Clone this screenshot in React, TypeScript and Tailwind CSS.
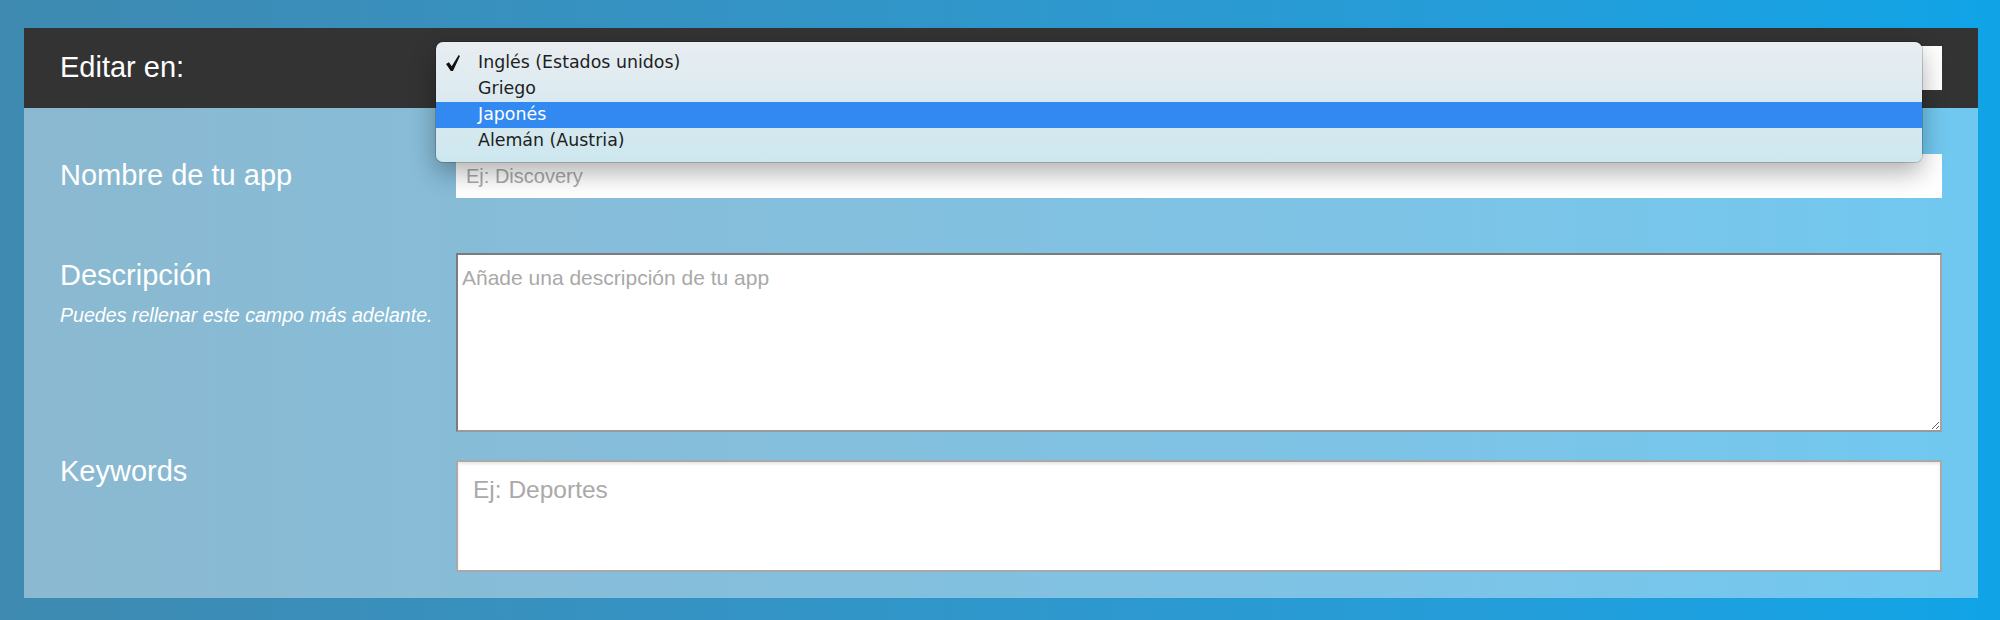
import { useState } from "react";

const languages = [
  "Inglés (Estados unidos)",
  "Griego",
  "Japonés",
  "Alemán (Austria)",
];

function Check() {
  return (
    <svg width="14" height="16" viewBox="0 0 13 15" className="fill-[#111]">
      <polygon points="0,8.4 2.7,6.8 5.3,10.6 11.8,0 13,0.9 6.5,14.9 4.4,14.9" />
    </svg>
  );
}

function LangMenu({ selected, hover }: { selected: number; hover: number }) {
  return (
    <div className="absolute left-[412px] top-[14px] w-[1486px] rounded-[7px] bg-gradient-to-b from-[#e8edf1] to-[#cde7ef] py-[8px] shadow-[0_0_0_1px_rgba(0,0,0,0.18),0_10px_26px_rgba(0,0,0,0.32)] font-['DejaVu_Sans',sans-serif] text-[17.4px] text-[#1e1e1e]">
      {languages.map((lang, i) => (
        <div
          key={lang}
          className={
            "flex h-[26px] items-center " +
            (i === hover ? "bg-[#3389f2] text-white" : "")
          }
        >
          <div className="flex w-[42px] justify-start pl-[10px]">
            {i === selected && <Check />}
          </div>
          <span className="leading-none">{lang}</span>
        </div>
      ))}
    </div>
  );
}

export default function App() {
  const [name, setName] = useState("");
  const [desc, setDesc] = useState("");
  const [keywords, setKeywords] = useState("");

  return (
    <div className="h-[620px] w-full bg-linear-to-r from-[#3e8ab1] to-[#0fa4e7] pl-[24px] pr-[22px] pt-[28px] font-['Liberation_Sans',Arial,sans-serif]">
      <div className="relative w-[1954px]">
        <div className="flex h-[80px] items-center bg-[#333333] px-[36px]">
          <div className="w-[396px] text-[29px] text-white">Editar en:</div>
          <div className="h-[44px] flex-1 bg-white" />
        </div>

        <div className="flex flex-col bg-white/40 px-[36px] pt-[46px] pb-[26px]">
          <div className="flex items-center">
            <label className="w-[396px] text-[29px] text-white">
              Nombre de tu app
            </label>
            <input
              value={name}
              onChange={(e) => setName(e.target.value)}
              placeholder="Ej: Discovery"
              className="h-[44px] flex-1 bg-white px-[10px] text-[20px] text-[#333] outline-none placeholder:text-[#a8a8a8]"
            />
          </div>

          <div className="mt-[55px] flex items-start">
            <div className="mt-[5px] w-[396px] text-white">
              <div className="text-[29px] leading-[1.2]">Descripción</div>
              <div className="mt-[11px] text-[19.6px] italic leading-[1.2]">
                Puedes rellenar este campo más adelante.
              </div>
            </div>
            <textarea
              value={desc}
              onChange={(e) => setDesc(e.target.value)}
              placeholder="Añade una descripción de tu app"
              className="h-[179px] flex-1 resize border-2 border-[#7c7c7c] border-b-[#9a9a9a] border-r-[#a3a3a3] bg-white px-[4px] pt-[10px] text-[21px] leading-[1.2] text-[#333] outline-none placeholder:text-[#a9a9a9]"
            />
          </div>

          <div className="mt-[23px] flex items-start">
            <label className="-mt-[1px] w-[396px] text-[29px] leading-[1.2] text-white">
              Keywords
            </label>
            <textarea
              value={keywords}
              onChange={(e) => setKeywords(e.target.value)}
              placeholder="Ej: Deportes"
              className="mt-[5px] h-[112px] flex-1 resize-none border-2 border-[#a9a9a9] bg-white px-[15px] pt-[13px] text-[24.5px] leading-[1.2] text-[#333] shadow-[inset_0_2px_3px_rgba(0,0,0,0.1)] outline-none placeholder:text-[#a9a9a9]"
            />
          </div>
        </div>

        <LangMenu selected={0} hover={2} />
      </div>
    </div>
  );
}
